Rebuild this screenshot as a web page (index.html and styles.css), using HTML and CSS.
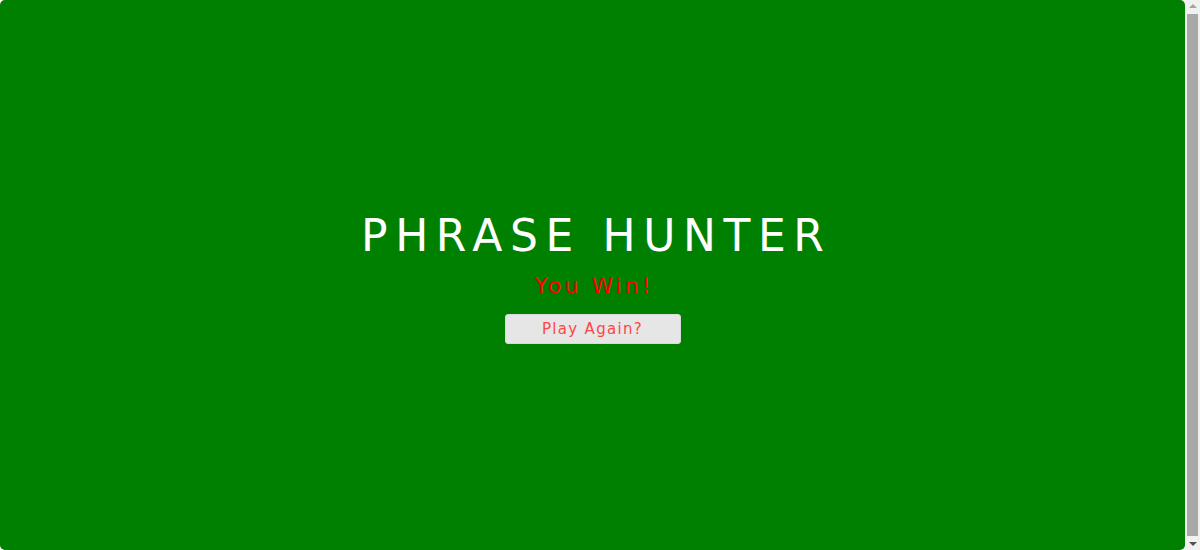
FILE: index.html
```html
<!DOCTYPE html>
<html lang="en">
<head>
<meta charset="utf-8">
<title>Phrase Hunter</title>
<link rel="stylesheet" href="styles.css">
</head>
<body>
<div class="overlay win">
  <h2 class="title">PHRASE HUNTER</h2>
  <h1 class="game-over-message">You Win!</h1>
  <button class="btn-reset">Play Again?</button>
</div>
<div class="scrollbar">
  <div class="arrow arrow-up"></div>
  <div class="thumb"></div>
  <div class="arrow arrow-down"></div>
</div>
</body>
</html>
```
FILE: styles.css
```css
html, body {
  margin: 0;
  padding: 0;
  height: 100%;
}
body {
  font-family: "DejaVu Sans", sans-serif;
  background: #fff;
  display: flex;
  overflow: hidden;
}
.overlay {
  flex: 1;
  border-radius: 5px;
  background: #008000;
  display: flex;
  flex-direction: column;
  align-items: center;
  justify-content: center;
  padding-top: 4px;
}
.title {
  margin: 0;
  color: #fff;
  font-weight: normal;
  font-size: 44px;
  line-height: 1.2;
  letter-spacing: 7.6px;
  margin-right: -7.6px;
}
.game-over-message {
  margin: 10px 0 0;
  color: #ff0000;
  font-weight: normal;
  font-size: 22px;
  line-height: 1.2;
  letter-spacing: 3px;
  margin-right: -3px;
}
.btn-reset {
  margin-top: 14px;
  width: 176px;
  height: 30px;
  border: 1px solid #d9d9d9;
  border-radius: 3px;
  background: #e6e6e6;
  color: #ff4545;
  font-family: "DejaVu Sans", sans-serif;
  font-size: 15px;
  letter-spacing: 1.3px;
  padding: 0;
}
.scrollbar {
  width: 15px;
  background: #f1f1f1;
  display: flex;
  flex-direction: column;
  align-items: center;
}
.arrow {
  height: 12px;
  width: 15px;
  display: flex;
  align-items: center;
  justify-content: center;
}
.arrow::before {
  content: "";
  border-left: 4px solid transparent;
  border-right: 4px solid transparent;
}
.arrow-up::before {
  border-bottom: 4px solid #a3a3a3;
}
.arrow-down::before {
  border-top: 4px solid #505050;
}
.thumb {
  flex: 1;
  width: 11px;
  margin: 2px 0;
  background: #a8a8a8;
}
```
